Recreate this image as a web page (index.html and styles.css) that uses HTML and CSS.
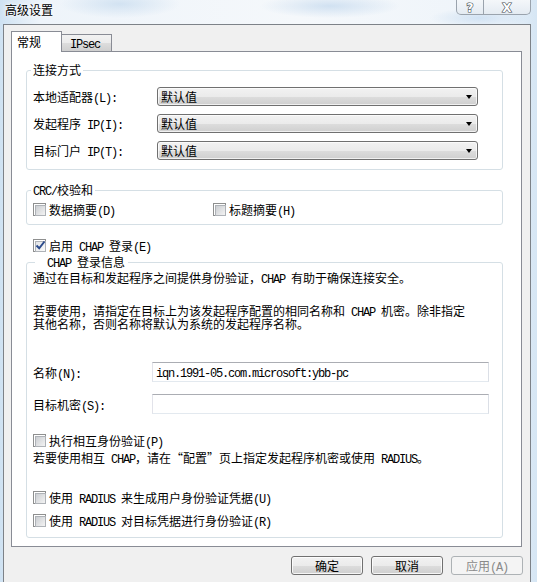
FILE: index.html
```html
<!DOCTYPE html>
<html>
<head>
  <meta charset="utf-8">
  <link rel="stylesheet" href="styles.css">
</head>
<body>
  <div class="titlebar">
    <div class="title">高级设置</div>
    <div class="caption">
      <div class="cap-btn help">
        <svg width="26" height="14"><text x="13" y="12">?</text></svg>
      </div>
      <div class="cap-btn close">
        <svg width="46" height="14"><text x="23" y="12">X</text></svg>
      </div>
    </div>
  </div>

  <div class="client">
    <div class="tabs">
      <div class="tab active">常规</div>
      <div class="tab"><span class="m">IPsec</span></div>
    </div>

    <div class="page">
      <fieldset class="group conn">
        <legend>连接方式</legend>
        <div class="form-grid">
          <label>本地适配器<span class="m">(L):</span></label>
          <div class="combo">默认值</div>
          <label>发起程序<span class="m"> IP(I):</span></label>
          <div class="combo">默认值</div>
          <label>目标门户<span class="m"> IP(T):</span></label>
          <div class="combo">默认值</div>
        </div>
      </fieldset>

      <fieldset class="group crc">
        <legend><span class="m">CRC/</span>校验和</legend>
        <div class="check-row">
          <div class="check"><span class="cb"></span><span class="lbl">数据摘要<span class="m">(D)</span></span></div>
          <div class="check"><span class="cb"></span><span class="lbl">标题摘要<span class="m">(H)</span></span></div>
        </div>
      </fieldset>

      <div class="check chap-enable">
        <span class="cb on">
          <svg width="11" height="11" viewBox="0 0 11 11"><path d="M1.5 5.5 L4.2 8.3 L9.5 1.5" /></svg>
        </span>
        <span class="lbl">启用<span class="m"> CHAP </span>登录<span class="m">(E)</span></span>
      </div>

      <fieldset class="group chap">
        <legend class="indent"><span class="m">CHAP </span>登录信息</legend>
        <p class="desc">通过在目标和发起程序之间提供身份验证，<span class="m">CHAP </span>有助于确保连接安全。</p>
        <p class="desc para">若要使用，请指定在目标上为该发起程序配置的相同名称和<span class="m"> CHAP </span>机密。除非指定<br>其他名称，否则名称将默认为系统的发起程序名称。</p>

        <div class="name-grid">
          <label>名称<span class="m">(N):</span></label>
          <div class="field"><span class="m">iqn.1991-05.com.microsoft:ybb-pc</span></div>
          <label>目标机密<span class="m">(S):</span></label>
          <div class="field"></div>
        </div>

        <div class="check mutual"><span class="cb"></span><span class="lbl">执行相互身份验证<span class="m">(P)</span></span></div>
        <p class="desc mutual-note">若要使用相互<span class="m"> CHAP</span>，请在“配置”页上指定发起程序机密或使用<span class="m"> RADIUS</span>。</p>

        <div class="check radius"><span class="cb"></span><span class="lbl">使用<span class="m"> RADIUS </span>来生成用户身份验证凭据<span class="m">(U)</span></span></div>
        <div class="check radius second"><span class="cb"></span><span class="lbl">使用<span class="m"> RADIUS </span>对目标凭据进行身份验证<span class="m">(R)</span></span></div>
      </fieldset>
    </div>

    <div class="buttons">
      <div class="btn">确定</div>
      <div class="btn">取消</div>
      <div class="btn disabled">应用<span class="m">(A)</span></div>
    </div>
  </div>
</body>
</html>
```

FILE: styles.css
```css
* {
  box-sizing: border-box;
}

body {
  margin: 0;
  width: 537px;
  height: 582px;
  overflow: hidden;
  font-family: "Noto Sans CJK SC", sans-serif;
  font-size: 12px;
  color: #000;
  background:
    radial-gradient(ellipse 60px 14px at 120px 4px, rgba(190, 214, 236, 0.6), transparent),
    radial-gradient(ellipse 70px 12px at 330px 6px, rgba(185, 210, 235, 0.6), transparent),
    radial-gradient(ellipse 50px 10px at 480px 18px, rgba(180, 208, 236, 0.5), transparent),
    linear-gradient(to right, #cfe2f2 0px, #eef4fa 40px, #f5f8fb 300px, #eef4fa 500px, #d6e6f4 537px);
}

/* half-width latin text, sized like the dialog's bitmap font */
.m {
  font-family: "Liberation Mono", monospace;
  font-size: 12px;
  letter-spacing: -1.2px;
  line-height: 0;
  white-space: pre;
}

/* title bar */
.titlebar {
  height: 24px;
  display: flex;
  justify-content: space-between;
  align-items: flex-start;
}

.title {
  padding-left: 5px;
  line-height: 20px;
  text-shadow: 0 0 6px #fff, 0 0 3px #fff;
}

.caption {
  display: flex;
  margin-right: 6px;
  border: 1px solid #9aa3ad;
  border-top: none;
  border-radius: 0 0 5px 5px;
  background: linear-gradient(#f4f7fa, #e4ebf2);
  overflow: hidden;
}

.cap-btn {
  height: 14px;
}

.cap-btn.help {
  border-right: 1px solid #9aa3ad;
}

.cap-btn svg text {
  font-family: "DejaVu Sans", sans-serif;
  font-size: 12px;
  font-weight: bold;
  text-anchor: middle;
  fill: #fff;
  stroke: #4a4f55;
  stroke-width: 1.2px;
  paint-order: stroke;
}

/* window body */
.client {
  margin-left: 3px;
  width: 528px;
  height: 558px;
  border: 1px solid #7d8288;
  border-bottom: none;
  background: #f0f0f0;
  padding: 6px 0 0 7px;
}

.tabs {
  display: flex;
  align-items: flex-end;
  height: 20px;
}

.tab {
  width: 51px;
  height: 17px;
  margin-left: -1px;
  padding-left: 8px;
  line-height: 16px;
  border: 1px solid #898c95;
  border-bottom: none;
  background: linear-gradient(#f2f2f2 0%, #ebebeb 50%, #dddddd 50%, #cfcfcf 100%);
}

.tab.active {
  margin-left: 0;
  width: 51px;
  height: 21px;
  margin-bottom: -1px;
  padding-left: 5px;
  line-height: 20px;
  background: #fff;
  position: relative;
  z-index: 1;
}

.page {
  width: 511px;
  height: 496px;
  border: 1px solid #898c95;
  background: #fff;
  padding: 11px 0 0 14px;
}

/* group boxes */
.group {
  width: 477px;
  margin: 0;
  min-width: 0;
  border: 1px solid #d5dfe5;
  border-radius: 3px;
  padding: 10px 0 9px 6px;
}

.group legend {
  margin-left: -2px;
  padding: 0 2px;
  line-height: 14px;
}

.group legend.indent {
  margin-left: 2px;
  padding: 0 3px 0 12px;
}

.form-grid {
  display: grid;
  grid-template-columns: 124px 321px;
  row-gap: 8px;
  align-items: center;
}

.combo {
  position: relative;
  height: 19px;
  padding-left: 3px;
  line-height: 17px;
  border: 1px solid #707070;
  border-radius: 3px;
  background: linear-gradient(#f2f2f2 0%, #ebebeb 50%, #dddddd 50%, #cfcfcf 100%);
  box-shadow: inset 0 0 0 1px rgba(255, 255, 255, 0.7);
}

.combo::after {
  content: "";
  position: absolute;
  right: 5px;
  top: 7px;
  border-left: 3.5px solid transparent;
  border-right: 3.5px solid transparent;
  border-top: 4px solid #000;
}

.crc {
  margin-top: 13px;
  padding-top: 6px;
  padding-bottom: 8px;
}

.check-row {
  display: grid;
  grid-template-columns: 180px auto;
}

.check {
  display: flex;
  align-items: center;
  gap: 3px;
  height: 13px;
}

.lbl {
  line-height: 13px;
  white-space: nowrap;
}

.cb {
  width: 13px;
  height: 13px;
  flex: none;
  border: 1px solid #8e8f8f;
  background: #fff;
  padding: 1px;
}

.cb::before {
  content: "";
  display: block;
  width: 100%;
  height: 100%;
  border: 1px solid #aeb2b7;
  background: linear-gradient(135deg, #cbced2, #f3f3f3);
}

.cb.on {
  position: relative;
}

.cb.on::before {
  background: linear-gradient(135deg, #e2e4e7, #fafafa);
}

.cb.on svg {
  position: absolute;
  left: 1px;
  top: 0;
}

.cb.on path {
  fill: none;
  stroke: #2b4b8c;
  stroke-width: 2px;
}

.chap-enable {
  margin: 14px 0 0 7px;
}

.chap {
  margin-top: 3px;
  padding-top: 3px;
  padding-bottom: 10px;
}

.desc {
  margin: 0;
  line-height: 12px;
}

.desc.para {
  margin-top: 20px;
  line-height: 13px;
}

.name-grid {
  margin-top: 32px;
  display: grid;
  grid-template-columns: 119px 337px;
  row-gap: 12px;
  align-items: center;
}

.field {
  height: 20px;
  padding-left: 3px;
  line-height: 18px;
  border: 1px solid;
  border-color: #abadb3 #dbdfe6 #e3e9ef #e2e3ea;
  background: #fff;
}

.mutual {
  margin-top: 20px;
}

.desc.mutual-note {
  margin-top: 5px;
}

.radius {
  margin-top: 27px;
}

.radius.second {
  margin-top: 10px;
}

/* dialog buttons */
.buttons {
  display: flex;
  justify-content: flex-end;
  gap: 8px;
  margin: 9px 7px 0 0;
}

.btn {
  width: 72px;
  height: 19px;
  line-height: 17px;
  text-align: center;
  border: 1px solid #707070;
  border-radius: 3px;
  background: linear-gradient(#f2f2f2 0%, #ebebeb 50%, #dddddd 50%, #cfcfcf 100%);
  box-shadow: inset 0 0 0 1px rgba(255, 255, 255, 0.8);
}

.btn.disabled {
  border-color: #adb2b5;
  background: #f4f4f4;
  color: #8a8a8a;
  box-shadow: none;
}
```
